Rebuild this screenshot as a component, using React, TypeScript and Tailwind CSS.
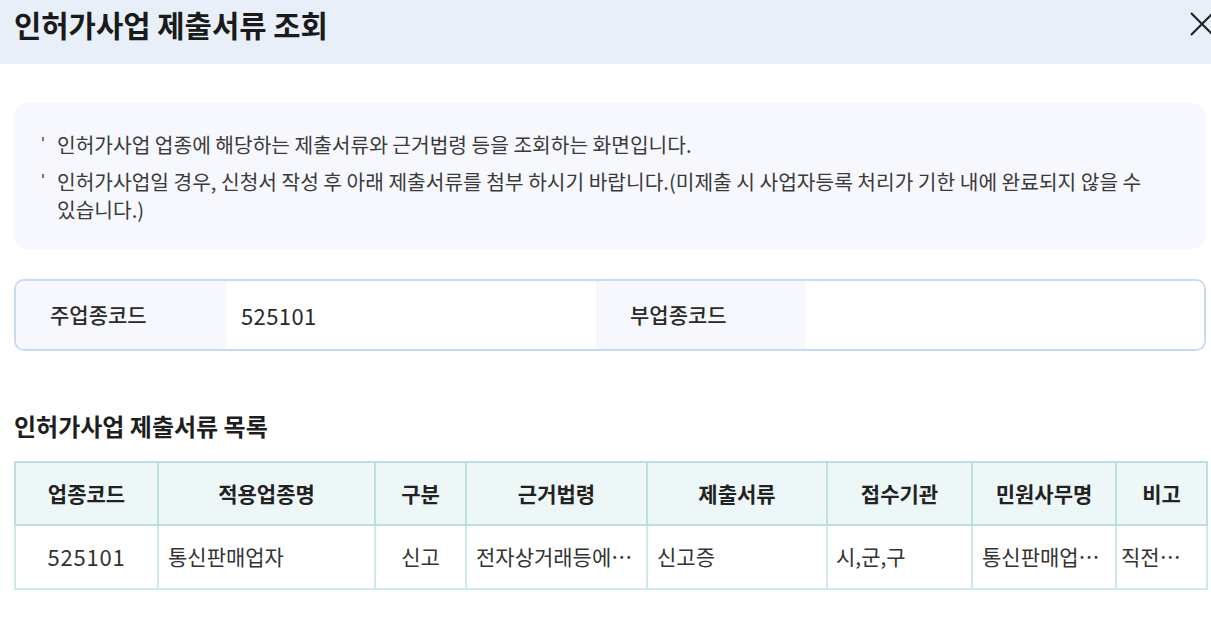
import React from "react";

const font = { fontFamily: '"Noto Sans CJK KR", "Noto Sans", sans-serif' };

const cols = [143, 217, 91, 181, 180, 145, 144, 91];
const heads = ["업종코드", "적용업종명", "구분", "근거법령", "제출서류", "접수기관", "민원사무명", "비고"];
const cells: { t: string; align: "center" | "left"; pad: string }[] = [
  { t: "525101", align: "center", pad: "px-[9px]" },
  { t: "통신판매업자", align: "left", pad: "px-[9px]" },
  { t: "신고", align: "center", pad: "px-[9px]" },
  { t: "전자상거래등에…", align: "left", pad: "px-[9px]" },
  { t: "신고증", align: "left", pad: "px-[9px]" },
  { t: "시,군,구", align: "left", pad: "px-[8px]" },
  { t: "통신판매업…", align: "left", pad: "px-[9px]" },
  { t: "직전…", align: "left", pad: "px-[4px]" },
];

export default function App() {
  return (
    <div className="w-[1211px] h-[638px] bg-white overflow-hidden text-[#333]" style={font}>
      <div className="h-[64px] bg-[#e8eff9] flex items-start justify-between pl-[14px] overflow-hidden">
        <h1 className="text-[29.7px] font-bold text-[#1a1a1a] leading-[36px] mt-[7px]">
          인허가사업 제출서류 조회
        </h1>
        <svg width="24" height="24" viewBox="0 0 24 24" className="mt-[12px] mr-[-3px] shrink-0">
          <path d="M1 1 L23 23 M23 1 L1 23" stroke="#222" strokeWidth="2.2" fill="none" />
        </svg>
      </div>

      <div className="pl-[14px] w-[1206px]">
        <div className="mt-[39px] h-[146px] rounded-[14px] bg-[#f6f8fd] pt-[27px] pl-[43px] pr-4 text-[20.3px] text-[#3a3a3a]">
          <div className="relative leading-[28px] whitespace-nowrap">
            <span className="absolute left-[-15px] top-[7px] w-[2px] h-[4px] bg-[#777]" />
            인허가사업 업종에 해당하는 제출서류와 근거법령 등을 조회하는 화면입니다.
          </div>
          <div className="relative leading-[28px] mt-[9px] whitespace-nowrap">
            <span className="absolute left-[-15px] top-[7px] w-[2px] h-[4px] bg-[#777]" />
            인허가사업일 경우, 신청서 작성 후 아래 제출서류를 첨부 하시기 바랍니다.(미제출 시 사업자등록 처리가 기한 내에 완료되지 않을 수
            <br />
            있습니다.)
          </div>
        </div>

        <div className="mt-[30px] h-[72px] border-2 border-[#cad9f2] rounded-[10px] flex overflow-hidden">
          <div className="w-[210px] bg-[#f6f8fd] flex items-center pl-[34px] text-[21px] text-[#2a2a2a] font-medium">
            주업종코드
          </div>
          <div className="w-[370px] bg-white flex items-center pl-[15px] text-[22px] text-[#2a2a2a] tracking-[0.4px]">
            525101
          </div>
          <div className="w-[210px] bg-[#f6f8fd] flex items-center pl-[34px] text-[21px] text-[#2a2a2a] font-medium">
            부업종코드
          </div>
          <div className="flex-1 bg-white" />
        </div>

        <h2 className="mt-[60px] text-[24px] font-bold text-[#1e1e1e] leading-[30px]">
          인허가사업 제출서류 목록
        </h2>

        <table className="mt-[20px] w-[1192px] table-fixed border-collapse">
          <colgroup>
            {cols.map((w, i) => (
              <col key={i} style={{ width: w }} />
            ))}
          </colgroup>
          <thead>
            <tr className="h-[63px] bg-[#eef7f7]">
              {heads.map((h, i) => (
                <th
                  key={i}
                  className="border-2 border-[#bddfe2] text-center text-[21px] font-bold text-[#222] px-2"
                >
                  {h}
                </th>
              ))}
            </tr>
          </thead>
          <tbody>
            <tr className="h-[64px] bg-white">
              {cells.map((c, i) => (
                <td
                  key={i}
                  className={
                    "border-2 border-[#cfe8ea] text-[21px] text-[#333] whitespace-nowrap overflow-hidden " +
                    c.pad +
                    " " +
                    (c.align === "center" ? "text-center" : "text-left")
                  }
                >
                  {i === 0 ? <span className="text-[22px] tracking-[0.8px]">{c.t}</span> : c.t}
                </td>
              ))}
            </tr>
          </tbody>
        </table>
      </div>
    </div>
  );
}
